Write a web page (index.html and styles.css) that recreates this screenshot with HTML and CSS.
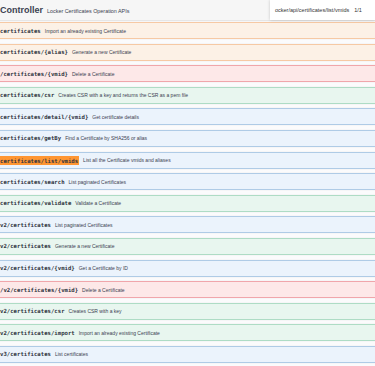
FILE: index.html
```html
<!DOCTYPE html>
<html lang="en">
<head>
<meta charset="UTF-8">
<meta name="viewport" content="width=device-width, initial-scale=1.0">
<title>Locker Certificates Controller</title>
<link rel="stylesheet" href="styles.css">
</head>
<body>
<div class="tag-header">
    <span class="tag-title">Controller</span>
    <span class="tag-desc">Locker Certificates Operation APIs</span>
    <div class="find-bar">
        <span class="find-query">ocker/api/certificates/list/vmids</span>
        <span class="find-count">1/1</span>
    </div>
</div>

<div class="opblocks">
    <div class="opblock put"><span class="path">certificates</span><span class="summary">Import an already existing Certificate</span></div>
    <div class="opblock put"><span class="path">certificates/{alias}</span><span class="summary">Generate a new Certificate</span></div>
    <div class="opblock delete"><span class="path">/certificates/{vmid}</span><span class="summary">Delete a Certificate</span></div>
    <div class="opblock post"><span class="path">certificates/csr</span><span class="summary">Creates CSR with a key and returns the CSR as a pem file</span></div>
    <div class="opblock get"><span class="path">certificates/detail/{vmid}</span><span class="summary">Get certificate details</span></div>
    <div class="opblock get"><span class="path">certificates/getBy</span><span class="summary">Find a Certificate by SHA256 or alias</span></div>
    <div class="opblock get"><span class="path"><mark class="find-hit">certificates/list/vmids</mark></span><span class="summary">List all the Certificate vmids and aliases</span></div>
    <div class="opblock get"><span class="path">certificates/search</span><span class="summary">List paginated Certificates</span></div>
    <div class="opblock post"><span class="path">certificates/validate</span><span class="summary">Validate a Certificate</span></div>
    <div class="opblock get"><span class="path">v2/certificates</span><span class="summary">List paginated Certificates</span></div>
    <div class="opblock post"><span class="path">v2/certificates</span><span class="summary">Generate a new Certificate</span></div>
    <div class="opblock get"><span class="path">v2/certificates/{vmid}</span><span class="summary">Get a Certificate by ID</span></div>
    <div class="opblock delete"><span class="path">/v2/certificates/{vmid}</span><span class="summary">Delete a Certificate</span></div>
    <div class="opblock post"><span class="path">v2/certificates/csr</span><span class="summary">Creates CSR with a key</span></div>
    <div class="opblock post"><span class="path">v2/certificates/import</span><span class="summary">Import an already existing Certificate</span></div>
    <div class="opblock get"><span class="path">v3/certificates</span><span class="summary">List certificates</span></div>
</div>
</body>
</html>
```

FILE: styles.css
```css
body {
    margin: 0;
    width: 375px;
    height: 366px;
    overflow: hidden;
    background-color: #fbfbfc;
    font-family: "Liberation Sans", Arial, sans-serif;
    color: #3b4151;
}

.tag-header {
    position: relative;
    height: 20px;
    display: flex;
    align-items: center;
    gap: 4px;
    background-color: #f6f6f6;
    border-bottom: 1px solid #e6e6e6;
}

.tag-title {
    font-size: 9px;
    font-weight: bold;
}

.tag-desc {
    font-size: 5.4px;
    padding-top: 1px;
}

/* browser find bar, sits over the page */
.find-bar {
    position: absolute;
    top: 0;
    right: 0;
    width: 100px;
    height: 20px;
    padding-left: 5px;
    display: flex;
    align-items: center;
    gap: 5px;
    background-color: #fff;
    box-shadow: 0 0 3px rgba(0, 0, 0, 0.2);
    font-size: 5.5px;
    color: #333;
}

.opblocks {
    display: flex;
    flex-direction: column;
    gap: 4.6px;
    padding-top: 1px;
}

.opblock {
    height: 15px;
    display: flex;
    align-items: center;
    border-top: 1px solid;
    border-bottom: 1px solid;
    box-shadow: 0 0 1px rgba(0, 0, 0, 0.12);
}

.opblock.put {
    background-color: #fcf1e6;
    border-color: #f6c9a4;
}

.opblock.delete {
    background-color: #fde8e8;
    border-color: #f0a6ab;
}

.opblock.post {
    background-color: #e8f6ef;
    border-color: #aedcc5;
}

.opblock.get {
    background-color: #ebf3fc;
    border-color: #afcbe6;
}

.path {
    font-family: "DejaVu Sans Mono", "Liberation Mono", monospace;
    font-weight: bold;
    font-size: 5.65px;
    color: #2f3441;
}

.find-hit {
    background-color: #ff9632;
    color: #2f3441;
    padding: 1.5px 1px 1.5px 0;
}

.summary {
    font-size: 5px;
    margin-left: 4px;
}
```
